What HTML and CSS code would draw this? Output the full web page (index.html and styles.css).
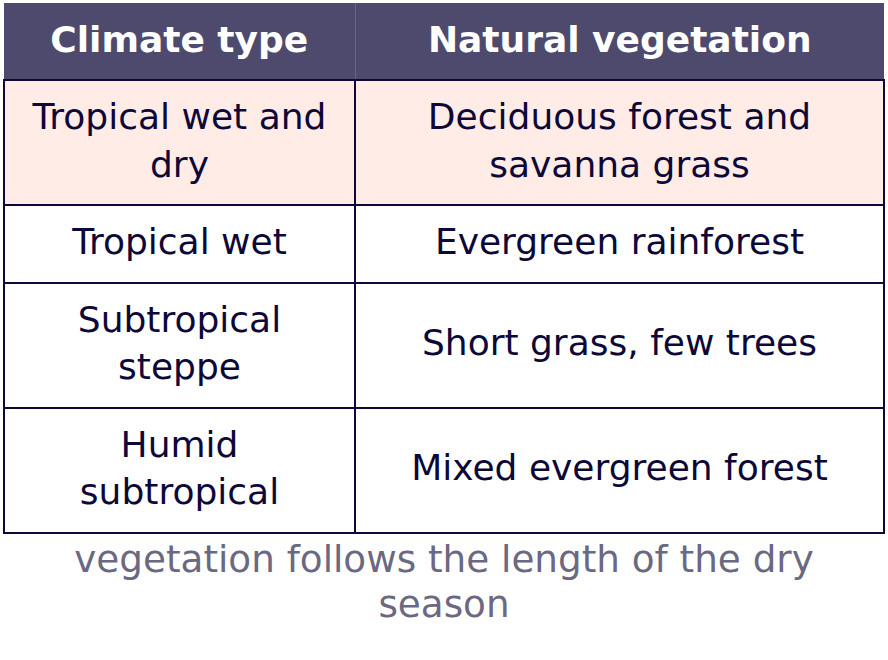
FILE: index.html
```html
<!DOCTYPE html>
<html>
<head>
<meta charset="utf-8">
<link rel="stylesheet" href="styles.css">
</head>
<body>
<div class="wrap">
<table class="tbl">
  <thead>
    <tr><th class="c1">Climate type</th><th class="c2">Natural vegetation</th></tr>
  </thead>
  <tbody>
    <tr class="hl"><td>Tropical wet and dry</td><td>Deciduous forest and savanna grass</td></tr>
    <tr><td>Tropical wet</td><td>Evergreen rainforest</td></tr>
    <tr><td>Subtropical steppe</td><td>Short grass, few trees</td></tr>
    <tr><td>Humid subtropical</td><td>Mixed evergreen forest</td></tr>
  </tbody>
</table>
<p class="caption">vegetation follows the length of the dry season</p>
</div>
</body>
</html>
```
FILE: styles.css
```css
html, body { margin: 0; padding: 0; background: #ffffff; }
body { font-family: "DejaVu Sans", sans-serif; }
.wrap { padding: 3px; width: 882px; }
.tbl {
  width: 882px;
  border-collapse: collapse;
  table-layout: fixed;
  font-size: 36px;
  line-height: 47.5px;
  color: #0d0838;
}
.tbl th {
  background: #4e4a6e;
  color: #ffffff;
  font-weight: bold;
  font-size: 36px;
  height: 74px;
  padding: 0 14px 2px;
  text-align: center;
}
.tbl th.c1 { width: 351px; border-right: 1px solid #6a6688; box-sizing: border-box; }
.tbl td {
  border: 2px solid #0d0838;
  padding: 12px 18px 16px;
  text-align: center;
  vertical-align: middle;
}
.tbl tr.hl td { background: #ffece6; }
.caption {
  margin: 0;
  padding: 3px 30px 0;
  text-align: center;
  font-size: 37.3px;
  line-height: 45px;
  color: #6b6882;
}
```
